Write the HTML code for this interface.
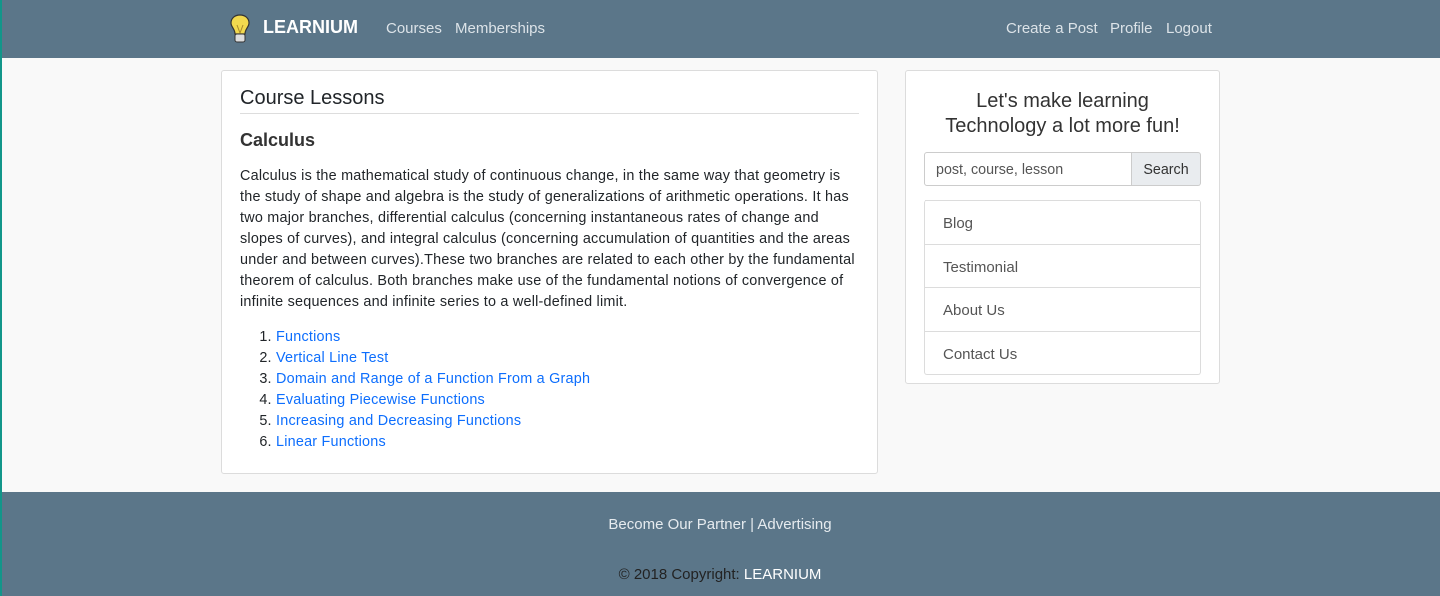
<!DOCTYPE html>
<html><head><meta charset="utf-8"><style>
*{box-sizing:border-box;margin:0;padding:0}
body{width:1440px;height:596px;overflow:hidden;background:#f9f9f9;font-family:"Liberation Sans",sans-serif;color:#212529;position:relative}
.nav{position:absolute;left:0;top:0;width:1440px;height:58px;background:#5b7689}
.nav a{position:absolute;top:20px;font-size:15px;color:#dce3e8;text-decoration:none}
.brand{position:absolute;left:263px;top:17px;font-size:18px;font-weight:bold;color:#fff}
.card{position:absolute;background:#fff;border:1px solid #dcdcdc;border-radius:3px}
a.l{color:#0d6efd;text-decoration:none}
.li{height:43.5px;border-top:1px solid #dcdcdc;padding:14px 18px 0;font-size:15px;color:#555}
.foot{position:absolute;left:0;top:492px;width:1440px;height:104px;background:#5b7689;text-align:center;font-size:15px}
</style></head><body>
<div style="position:absolute;left:0;top:0;width:2px;height:596px;background:#12968a;z-index:5"></div>
<div class="nav">
<svg style="position:absolute;left:229px;top:13px" width="22" height="32" viewBox="0 0 22 32"><path d="M11 2C5 2 2 6 2 10c0 4 4 6 4 11h10c0-5 4-7 4-11 0-4-3-8-9-8z" fill="#f2d94e" stroke="#333" stroke-width="1.2"/><path d="M8 12l3 8 3-8" fill="none" stroke="#a8882a"/><rect x="6" y="21" width="10" height="8" rx="2" fill="#ddd" stroke="#333"/></svg>
<div class="brand">LEARNIUM</div>
<a style="left:386px">Courses</a><a style="left:455px">Memberships</a>
<a style="left:1006px">Create a Post</a><a style="left:1110px">Profile</a><a style="left:1166px">Logout</a>
</div>
<div class="card" style="left:221px;top:70px;width:657px;height:404px;padding:0 18px">
<div style="font-size:20px;margin-top:16px;padding-bottom:3px;border-bottom:1px solid #ddd">Course Lessons</div>
<div style="font-size:18px;font-weight:bold;color:#333;margin-top:16px">Calculus</div>
<p style="font-size:14.4px;letter-spacing:.22px;line-height:21px;margin-top:15px">Calculus is the mathematical study of continuous change, in the same way that geometry is the study of shape and algebra is the study of generalizations of arithmetic operations. It has two major branches, differential calculus (concerning instantaneous rates of change and slopes of curves), and integral calculus (concerning accumulation of quantities and the areas under and between curves).These two branches are related to each other by the fundamental theorem of calculus. Both branches make use of the fundamental notions of convergence of infinite sequences and infinite series to a well-defined limit.</p>
<ol style="font-size:14.4px;letter-spacing:.22px;line-height:21px;margin-top:14px;padding-left:36px">
<li><a class="l">Functions</a></li><li><a class="l">Vertical Line Test</a></li><li><a class="l">Domain and Range of a Function From a Graph</a></li><li><a class="l">Evaluating Piecewise Functions</a></li><li><a class="l">Increasing and Decreasing Functions</a></li><li><a class="l">Linear Functions</a></li></ol>
</div>
<div class="card" style="left:905px;top:70px;width:315px;height:314px;padding:0 18px">
<div style="text-align:center;font-size:20px;line-height:25px;margin-top:18px;color:#333">Let's make learning<br>Technology a lot more fun!</div>
<div style="display:flex;margin-top:13px;height:34px">
<div style="flex:1;border:1px solid #ccc;border-radius:3px 0 0 3px;padding:9px 11px 0;font-size:14.3px;color:#555">post, course, lesson</div>
<div style="width:69px;border:1px solid #ccc;border-left:0;background:#e9ecef;border-radius:0 3px 3px 0;padding:9px 0 0;text-align:center;font-size:14.3px;color:#333">Search</div></div>
<div style="margin-top:14px;border:1px solid #dcdcdc;border-top:0;border-radius:3px">
<div class="li">Blog</div><div class="li">Testimonial</div><div class="li">About Us</div><div class="li">Contact Us</div></div>
</div>
<div class="foot"><div style="margin-top:24px;color:#e6ebef">Become Our Partner | Advertising</div>
<div style="margin-top:33px;color:#222">© 2018 Copyright: <span style="color:#fff">LEARNIUM</span></div></div>
</body></html>
